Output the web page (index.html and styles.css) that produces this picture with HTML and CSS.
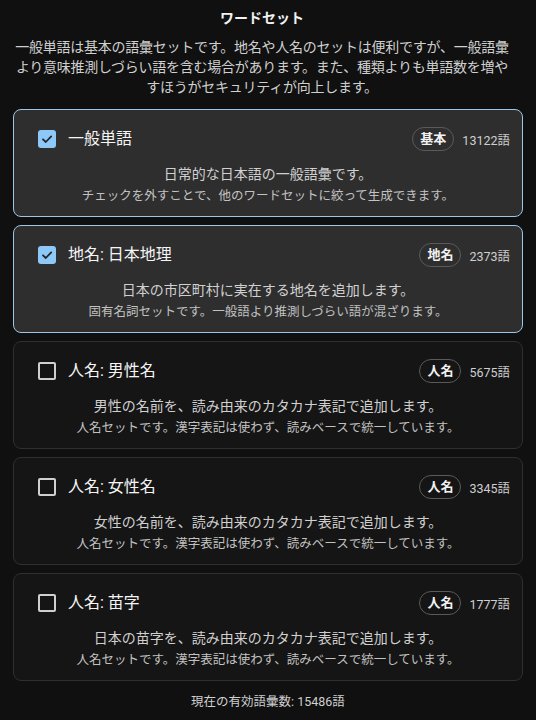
FILE: index.html
```html
<!DOCTYPE html>
<html lang="ja">
<head>
<meta charset="utf-8">
<link rel="stylesheet" href="styles.css">
</head>
<body>
<div class="page">
  <header class="head">
    <h1 class="title">ワードセット</h1>
    <p class="intro">一般単語は基本の語彙セットです。地名や人名のセットは便利ですが、一般語彙より意味推測しづらい語を含む場合があります。また、種類よりも単語数を増やすほうがセキュリティが向上します。</p>
  </header>
  <div class="list">
    <div class="card on">
      <div class="row">
        <span class="box checked"><svg viewBox="0 0 18 18" width="18" height="18"><path d="M5 9.3 L7.8 12 L13.2 6.4" fill="none" stroke="#22262b" stroke-width="1.8" stroke-linecap="round" stroke-linejoin="round"/></svg></span>
        <span class="name">一般単語</span>
        <span class="badge">基本</span>
        <span class="count">13122語</span>
      </div>
      <div class="desc">
        <div class="d1">日常的な日本語の一般語彙です。</div>
        <div class="d2">チェックを外すことで、他のワードセットに絞って生成できます。</div>
      </div>
    </div>
    <div class="card on">
      <div class="row">
        <span class="box checked"><svg viewBox="0 0 18 18" width="18" height="18"><path d="M5 9.3 L7.8 12 L13.2 6.4" fill="none" stroke="#22262b" stroke-width="1.8" stroke-linecap="round" stroke-linejoin="round"/></svg></span>
        <span class="name">地名: 日本地理</span>
        <span class="badge">地名</span>
        <span class="count">2373語</span>
      </div>
      <div class="desc">
        <div class="d1">日本の市区町村に実在する地名を追加します。</div>
        <div class="d2">固有名詞セットです。一般語より推測しづらい語が混ざります。</div>
      </div>
    </div>
    <div class="card">
      <div class="row">
        <span class="box"></span>
        <span class="name">人名: 男性名</span>
        <span class="badge">人名</span>
        <span class="count">5675語</span>
      </div>
      <div class="desc">
        <div class="d1">男性の名前を、読み由来のカタカナ表記で追加します。</div>
        <div class="d2">人名セットです。漢字表記は使わず、読みベースで統一しています。</div>
      </div>
    </div>
    <div class="card">
      <div class="row">
        <span class="box"></span>
        <span class="name">人名: 女性名</span>
        <span class="badge">人名</span>
        <span class="count">3345語</span>
      </div>
      <div class="desc">
        <div class="d1">女性の名前を、読み由来のカタカナ表記で追加します。</div>
        <div class="d2">人名セットです。漢字表記は使わず、読みベースで統一しています。</div>
      </div>
    </div>
    <div class="card">
      <div class="row">
        <span class="box"></span>
        <span class="name">人名: 苗字</span>
        <span class="badge">人名</span>
        <span class="count">1777語</span>
      </div>
      <div class="desc">
        <div class="d1">日本の苗字を、読み由来のカタカナ表記で追加します。</div>
        <div class="d2">人名セットです。漢字表記は使わず、読みベースで統一しています。</div>
      </div>
    </div>
  </div>
  <p class="total">現在の有効語彙数: 15486語</p>
</div>
</body>
</html>
```

FILE: styles.css
```css
html, body {
  margin: 0;
  padding: 0;
  background: #101010;
}
body {
  font-family: Roboto, "Noto Sans CJK JP", "Noto Sans", sans-serif;
  color: #e6e6e6;
}
.page {
  padding: 8px 13px 0;
}
.head {
  padding-right: 12px;
  text-align: center;
}
.title {
  margin: 0;
  font-size: 14px;
  line-height: 20px;
  font-weight: 700;
  color: #f2f2f2;
}
.intro {
  margin: 9px 0 0;
  font-size: 14px;
  line-height: 20px;
  letter-spacing: -0.25px;
  color: #cfcfcf;
}
.list {
  margin-top: 12px;
  display: flex;
  flex-direction: column;
  gap: 8px;
}
.card {
  box-sizing: border-box;
  height: 108px;
  border: 1px solid #2f2f2f;
  border-radius: 8px;
  background: #151515;
  padding: 17px 12px 0;
}
.card.on {
  background: #2e2e2e;
  border-color: #9cc6e6;
}
.row {
  display: flex;
  align-items: center;
  height: 24px;
}
.box {
  box-sizing: border-box;
  width: 18px;
  height: 18px;
  margin-left: 12px;
  border: 2px solid #cfcfcf;
  border-radius: 2px;
  flex: none;
  display: flex;
}
.box.checked {
  border: none;
  border-radius: 3px;
  background: #8ec8f8;
}
.name {
  margin-left: 12px;
  font-size: 16px;
  line-height: 22px;
  font-weight: 400;
  color: #f5f5f5;
  flex: 1;
}
.badge {
  box-sizing: border-box;
  height: 24px;
  padding: 0 7px;
  border: 1px solid #5a5a5a;
  border-radius: 12px;
  font-size: 13px;
  font-weight: 700;
  line-height: 22px;
  color: #f2f2f2;
}
.count {
  margin-left: 8px;
  font-size: 12.5px;
  color: #cfcfcf;
}
.desc {
  margin-top: 12px;
  text-align: center;
}
.d1 {
  font-size: 14px;
  line-height: 22px;
  color: #d0d0d0;
}
.d2 {
  margin-top: 1px;
  font-size: 12.5px;
  line-height: 20px;
  color: #c2c2c2;
}
.total {
  margin: 11px 0 0;
  text-align: center;
  font-size: 12.5px;
  line-height: 20px;
  color: #cfcfcf;
}
```
